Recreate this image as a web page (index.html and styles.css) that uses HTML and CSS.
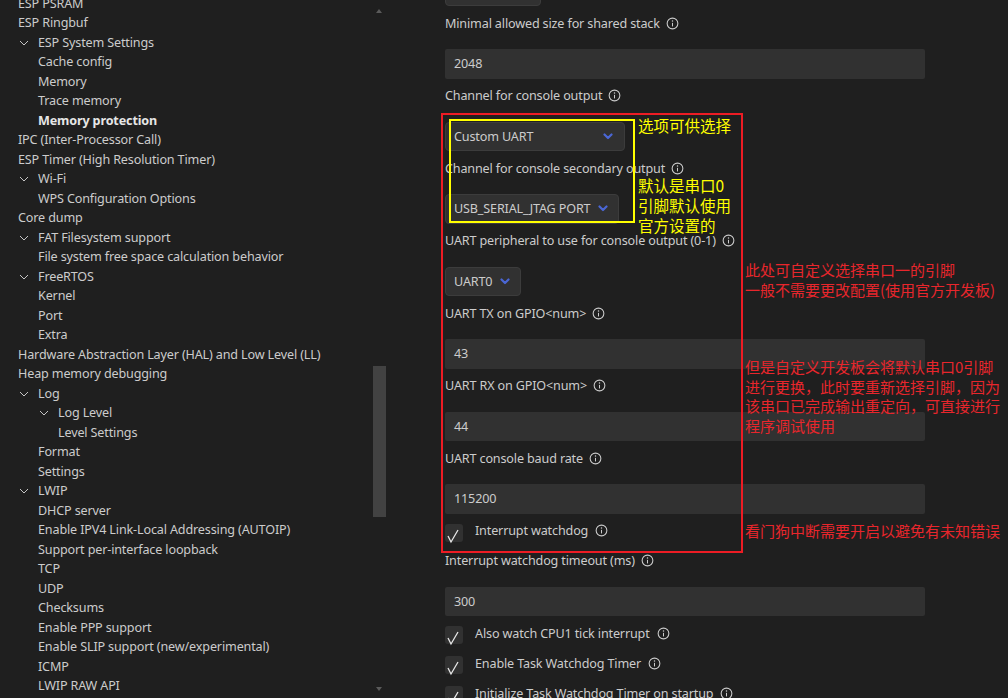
FILE: index.html
```html
<!DOCTYPE html>
<html lang="zh-CN">
<head>
  <meta charset="UTF-8" />
  <title>SDK Configuration editor</title>
  <link rel="stylesheet" href="styles.css">
</head>
<body>
<div class="app">

  <!-- Menu tree -->
  <aside class="sidebar">
    <ul class="tree">
      <li class="d0">ESP PSRAM</li>
      <li class="d0">ESP Ringbuf</li>
      <li class="d1"><span class="twisty"><svg width="10" height="6" viewBox="0 0 10 6"><polyline points="1,1 5,5 9,1"/></svg></span>ESP System Settings</li>
      <li class="d1">Cache config</li>
      <li class="d1">Memory</li>
      <li class="d1">Trace memory</li>
      <li class="d1 active">Memory protection</li>
      <li class="d0">IPC (Inter-Processor Call)</li>
      <li class="d0">ESP Timer (High Resolution Timer)</li>
      <li class="d1"><span class="twisty"><svg width="10" height="6" viewBox="0 0 10 6"><polyline points="1,1 5,5 9,1"/></svg></span>Wi-Fi</li>
      <li class="d1">WPS Configuration Options</li>
      <li class="d0">Core dump</li>
      <li class="d1"><span class="twisty"><svg width="10" height="6" viewBox="0 0 10 6"><polyline points="1,1 5,5 9,1"/></svg></span>FAT Filesystem support</li>
      <li class="d1">File system free space calculation behavior</li>
      <li class="d1"><span class="twisty"><svg width="10" height="6" viewBox="0 0 10 6"><polyline points="1,1 5,5 9,1"/></svg></span>FreeRTOS</li>
      <li class="d1">Kernel</li>
      <li class="d1">Port</li>
      <li class="d1">Extra</li>
      <li class="d0">Hardware Abstraction Layer (HAL) and Low Level (LL)</li>
      <li class="d0">Heap memory debugging</li>
      <li class="d1"><span class="twisty"><svg width="10" height="6" viewBox="0 0 10 6"><polyline points="1,1 5,5 9,1"/></svg></span>Log</li>
      <li class="d2"><span class="twisty"><svg width="10" height="6" viewBox="0 0 10 6"><polyline points="1,1 5,5 9,1"/></svg></span>Log Level</li>
      <li class="d2">Level Settings</li>
      <li class="d1">Format</li>
      <li class="d1">Settings</li>
      <li class="d1"><span class="twisty"><svg width="10" height="6" viewBox="0 0 10 6"><polyline points="1,1 5,5 9,1"/></svg></span>LWIP</li>
      <li class="d1">DHCP server</li>
      <li class="d1">Enable IPV4 Link-Local Addressing (AUTOIP)</li>
      <li class="d1">Support per-interface loopback</li>
      <li class="d1">TCP</li>
      <li class="d1">UDP</li>
      <li class="d1">Checksums</li>
      <li class="d1">Enable PPP support</li>
      <li class="d1">Enable SLIP support (new/experimental)</li>
      <li class="d1">ICMP</li>
      <li class="d1">LWIP RAW API</li>
    </ul>
    <div class="scrollbar">
      <span class="arrow up"></span>
      <span class="thumb"></span>
      <span class="arrow down"></span>
    </div>
  </aside>

  <!-- Settings -->
  <main class="panel">
    <div class="form">
      <div class="select cut"></div>

      <div class="label">Minimal allowed size for shared stack <svg class="info" viewBox="0 0 16 16"><circle cx="8" cy="8" r="6.6"/><circle class="dot" cx="8" cy="4.9" r="0.9"/><line x1="8" y1="7.2" x2="8" y2="11.6"/></svg></div>
      <div class="input">2048</div>

      <div class="label">Channel for console output <svg class="info" viewBox="0 0 16 16"><circle cx="8" cy="8" r="6.6"/><circle class="dot" cx="8" cy="4.9" r="0.9"/><line x1="8" y1="7.2" x2="8" y2="11.6"/></svg></div>
      <div class="select wide">Custom UART <svg class="chev" width="10" height="7" viewBox="0 0 10 7"><polyline points="1.5,1.5 5,5 8.5,1.5"/></svg></div>

      <div class="label">Channel for console secondary output <svg class="info" viewBox="0 0 16 16"><circle cx="8" cy="8" r="6.6"/><circle class="dot" cx="8" cy="4.9" r="0.9"/><line x1="8" y1="7.2" x2="8" y2="11.6"/></svg></div>
      <div class="select">USB_SERIAL_JTAG PORT <svg class="chev" width="10" height="7" viewBox="0 0 10 7"><polyline points="1.5,1.5 5,5 8.5,1.5"/></svg></div>

      <div class="label">UART peripheral to use for console output (0-1) <svg class="info" viewBox="0 0 16 16"><circle cx="8" cy="8" r="6.6"/><circle class="dot" cx="8" cy="4.9" r="0.9"/><line x1="8" y1="7.2" x2="8" y2="11.6"/></svg></div>
      <div class="select">UART0 <svg class="chev" width="10" height="7" viewBox="0 0 10 7"><polyline points="1.5,1.5 5,5 8.5,1.5"/></svg></div>

      <div class="label">UART TX on GPIO&lt;num&gt; <svg class="info" viewBox="0 0 16 16"><circle cx="8" cy="8" r="6.6"/><circle class="dot" cx="8" cy="4.9" r="0.9"/><line x1="8" y1="7.2" x2="8" y2="11.6"/></svg></div>
      <div class="input">43</div>

      <div class="label">UART RX on GPIO&lt;num&gt; <svg class="info" viewBox="0 0 16 16"><circle cx="8" cy="8" r="6.6"/><circle class="dot" cx="8" cy="4.9" r="0.9"/><line x1="8" y1="7.2" x2="8" y2="11.6"/></svg></div>
      <div class="input">44</div>

      <div class="label">UART console baud rate <svg class="info" viewBox="0 0 16 16"><circle cx="8" cy="8" r="6.6"/><circle class="dot" cx="8" cy="4.9" r="0.9"/><line x1="8" y1="7.2" x2="8" y2="11.6"/></svg></div>
      <div class="input">115200</div>

      <div class="check"><span class="box"><svg width="18" height="20" viewBox="0 0 18 20"><polyline points="3,12 6,18 13,6"/></svg></span>Interrupt watchdog <svg class="info" viewBox="0 0 16 16"><circle cx="8" cy="8" r="6.6"/><circle class="dot" cx="8" cy="4.9" r="0.9"/><line x1="8" y1="7.2" x2="8" y2="11.6"/></svg></div>

      <div class="label">Interrupt watchdog timeout (ms) <svg class="info" viewBox="0 0 16 16"><circle cx="8" cy="8" r="6.6"/><circle class="dot" cx="8" cy="4.9" r="0.9"/><line x1="8" y1="7.2" x2="8" y2="11.6"/></svg></div>
      <div class="input">300</div>

      <div class="check"><span class="box"><svg width="18" height="20" viewBox="0 0 18 20"><polyline points="3,12 6,18 13,6"/></svg></span>Also watch CPU1 tick interrupt <svg class="info" viewBox="0 0 16 16"><circle cx="8" cy="8" r="6.6"/><circle class="dot" cx="8" cy="4.9" r="0.9"/><line x1="8" y1="7.2" x2="8" y2="11.6"/></svg></div>
      <div class="check"><span class="box"><svg width="18" height="20" viewBox="0 0 18 20"><polyline points="3,12 6,18 13,6"/></svg></span>Enable Task Watchdog Timer <svg class="info" viewBox="0 0 16 16"><circle cx="8" cy="8" r="6.6"/><circle class="dot" cx="8" cy="4.9" r="0.9"/><line x1="8" y1="7.2" x2="8" y2="11.6"/></svg></div>
      <div class="check"><span class="box"><svg width="18" height="20" viewBox="0 0 18 20"><polyline points="3,12 6,18 13,6"/></svg></span>Initialize Task Watchdog Timer on startup <svg class="info" viewBox="0 0 16 16"><circle cx="8" cy="8" r="6.6"/><circle class="dot" cx="8" cy="4.9" r="0.9"/><line x1="8" y1="7.2" x2="8" y2="11.6"/></svg></div>
    </div>
  </main>

  <!-- Annotations drawn over the screenshot -->
  <div class="mark red-box"></div>
  <div class="mark yellow-box"></div>
  <div class="note yellow n1">选项可供选择</div>
  <div class="note yellow n2">默认是串口0<br>引脚默认使用<br>官方设置的</div>
  <div class="note red n3">此处可自定义选择串口一的引脚<br>一般不需要更改配置(使用官方开发板)</div>
  <div class="note red n4">但是自定义开发板会将默认串口0引脚<br>进行更换，此时要重新选择引脚，因为<br>该串口已完成输出重定向，可直接进行<br>程序调试使用</div>
  <div class="note red n5">看门狗中断需要开启以避免有未知错误</div>
</div>
</body>
</html>
```

FILE: styles.css
```css
body {
  margin: 0;
  height: 698px;
  overflow: hidden;
  background: #1f1f1f;
  color: #cccccc;
  font-family: "Noto Sans", "Noto Sans CJK SC", sans-serif;
  font-size: 12.6px;
  letter-spacing: -0.15px;
}

.app {
  position: relative;
  display: flex;
  height: 698px;
  overflow: hidden;
}

/* Arbol lateral */
.sidebar {
  width: 390px;
  flex-shrink: 0;
  display: flex;
}
.tree {
  list-style: none;
  margin: -6.25px 0 0 0;
  padding: 0;
  width: 372px;
  white-space: nowrap;
  overflow: hidden;
}
.tree li {
  height: 19.5px;
  line-height: 19.5px;
}
.d0 { padding-left: 18px; }
.d1 { padding-left: 38px; }
.d2 { padding-left: 58px; }
.tree .active {
  font-weight: bold;
  color: #e6e6e6;
}
.twisty {
  display: inline-block;
  width: 20px;
  height: 19.5px;
  margin-left: -20px;
  vertical-align: top;
}
.twisty svg {
  display: block;
  margin: 7px 0 0 1px;
  fill: none;
  stroke: #c5c5c5;
  stroke-width: 1;
}

.scrollbar {
  width: 14px;
  display: flex;
  flex-direction: column;
  align-items: center;
}
.arrow {
  width: 0;
  height: 0;
  border-left: 3.5px solid transparent;
  border-right: 3.5px solid transparent;
}
.arrow.up {
  margin-top: 9px;
  border-bottom: 4px solid #5a5a5a;
}
.arrow.down {
  margin-top: 170px;
  border-top: 4px solid #5a5a5a;
}
.thumb {
  width: 13px;
  height: 151px;
  margin-top: 353px;
  background: #424242;
}

/* Panel de ajustes */
.panel {
  flex: 1;
  padding-left: 55px;
}
.form {
  width: 480px;
  display: flex;
  flex-direction: column;
  align-items: flex-start;
}
.label {
  display: flex;
  align-items: center;
  gap: 6px;
  height: 20px;
  margin-bottom: 16px;
  white-space: nowrap;
}
.info {
  width: 13px;
  height: 13px;
  flex-shrink: 0;
  fill: none;
  stroke: #cccccc;
  stroke-width: 1.3;
}
.info .dot {
  fill: #cccccc;
  stroke: none;
}
.input {
  box-sizing: border-box;
  width: 480px;
  height: 29.5px;
  padding-left: 9px;
  display: flex;
  align-items: center;
  background: #313131;
  border-radius: 2px;
  margin-bottom: 7px;
}
.select {
  box-sizing: border-box;
  height: 29.5px;
  padding: 0 10px 0 8px;
  display: flex;
  align-items: center;
  gap: 8px;
  background: #313131;
  border: 1px solid #3c3c3c;
  border-radius: 4px;
  margin-bottom: 7px;
  white-space: nowrap;
}
.select.wide { width: 180px; padding-right: 11px; }
.select.cut {
  width: 96px;
  margin-top: -23.5px;
}
.chev {
  margin-left: auto;
  fill: none;
  stroke: #4a66d4;
  stroke-width: 2.2;
  stroke-linecap: round;
  stroke-linejoin: round;
}
.check {
  display: flex;
  align-items: center;
  gap: 7px;
  height: 20px;
  margin-bottom: 10px;
  white-space: nowrap;
}
.box {
  position: relative;
  width: 18px;
  height: 18px;
  margin-top: 4px;
  margin-right: 5px;
  flex-shrink: 0;
  background: #313131;
  border-radius: 3px;
}
.box svg {
  display: block;
  overflow: visible;
  fill: none;
  stroke: #e8e8e8;
  stroke-width: 1.3;
}

/* Anotaciones */
.mark {
  position: absolute;
  box-sizing: border-box;
  border: 2px solid;
}
.red-box {
  left: 441px;
  top: 113px;
  width: 302px;
  height: 440px;
  border-color: #ed1c24;
}
.yellow-box {
  left: 449px;
  top: 119px;
  width: 186px;
  height: 104px;
  border-color: #ffff00;
}
.note {
  position: absolute;
  white-space: nowrap;
  letter-spacing: 0;
  font-family: "Noto Sans CJK SC", sans-serif;
}
.note.yellow {
  color: #ffff00;
  font-size: 15.5px;
  line-height: 20px;
}
.note.red {
  color: #e8262c;
  font-size: 15px;
  line-height: 19.5px;
}
.n1 { left: 638px; top: 115px; }
.n2 { left: 638px; top: 175px; }
.n3 { left: 745px; top: 260px; line-height: 20px; }
.n4 { left: 745px; top: 357px; }
.n5 { left: 745px; top: 521px; }
```
